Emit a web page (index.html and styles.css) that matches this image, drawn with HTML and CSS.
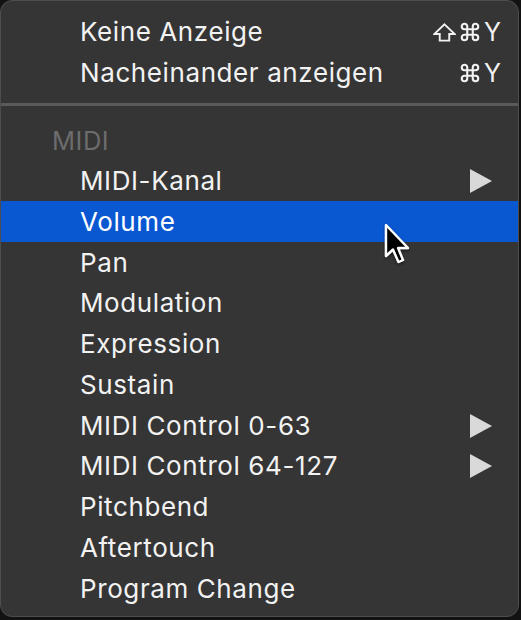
FILE: index.html
```html
<!DOCTYPE html>
<html lang="de">
<head>
<meta charset="utf-8">
<title>Menü</title>
<link rel="stylesheet" href="styles.css">
</head>
<body>
<div class="menu">
  <div class="row">
    <span class="label">Keine Anzeige</span>
    <span class="shortcut">
      <svg class="key-shift" viewBox="0 0 24 20" width="23" height="19"><path d="M12 1.5 L22.5 11.5 H17 V18.5 H7 V11.5 H1.5 Z" fill="none" stroke="#f2f2f2" stroke-width="2" stroke-linejoin="miter"/></svg>
      <svg class="key-cmd" viewBox="0 0 24 24" width="22" height="22"><path d="M18 3a3 3 0 0 0-3 3v12a3 3 0 0 0 3 3 3 3 0 0 0 3-3 3 3 0 0 0-3-3H6a3 3 0 0 0-3 3 3 3 0 0 0 3 3 3 3 0 0 0 3-3V6a3 3 0 0 0-3-3 3 3 0 0 0-3 3 3 3 0 0 0 3 3h12a3 3 0 0 0 3-3 3 3 0 0 0-3-3z" fill="none" stroke="#f2f2f2" stroke-width="2.3"/></svg>
      <span class="key-letter">Y</span>
    </span>
  </div>
  <div class="row">
    <span class="label">Nacheinander anzeigen</span>
    <span class="shortcut">
      <svg class="key-cmd" viewBox="0 0 24 24" width="22" height="22"><path d="M18 3a3 3 0 0 0-3 3v12a3 3 0 0 0 3 3 3 3 0 0 0 3-3 3 3 0 0 0-3-3H6a3 3 0 0 0-3 3 3 3 0 0 0 3 3 3 3 0 0 0 3-3V6a3 3 0 0 0-3-3 3 3 0 0 0-3 3 3 3 0 0 0 3 3h12a3 3 0 0 0 3-3 3 3 0 0 0-3-3z" fill="none" stroke="#f2f2f2" stroke-width="2.3"/></svg>
      <span class="key-letter">Y</span>
    </span>
  </div>
  <div class="sep"></div>
  <div class="header">MIDI</div>
  <div class="row">
    <span class="label">MIDI-Kanal</span>
    <svg class="sub" viewBox="0 0 22 24" width="22" height="24"><polygon points="0,0 22,12 0,24" fill="#d9d9d9"/></svg>
  </div>
  <div class="row selected"><span class="label">Volume</span></div>
  <div class="row"><span class="label">Pan</span></div>
  <div class="row"><span class="label">Modulation</span></div>
  <div class="row"><span class="label">Expression</span></div>
  <div class="row"><span class="label">Sustain</span></div>
  <div class="row">
    <span class="label">MIDI Control 0-63</span>
    <svg class="sub" viewBox="0 0 22 24" width="22" height="24"><polygon points="0,0 22,12 0,24" fill="#d9d9d9"/></svg>
  </div>
  <div class="row">
    <span class="label">MIDI Control 64-127</span>
    <svg class="sub" viewBox="0 0 22 24" width="22" height="24"><polygon points="0,0 22,12 0,24" fill="#d9d9d9"/></svg>
  </div>
  <div class="row"><span class="label">Pitchbend</span></div>
  <div class="row"><span class="label">Aftertouch</span></div>
  <div class="row"><span class="label">Program Change</span></div>

  <svg class="cursor" viewBox="-3 -3 30 45" width="30" height="45">
    <defs>
      <filter id="sh" x="-30%" y="-30%" width="160%" height="160%">
        <feDropShadow dx="0" dy="1.5" stdDeviation="1.5" flood-color="#000" flood-opacity="0.6"/>
      </filter>
    </defs>
    <polygon points="0,0 0,31 7,24.5 12.5,37 17,35 12,23 22,23" fill="#000" stroke="#fff" stroke-width="2.4" stroke-linejoin="round" filter="url(#sh)"/>
  </svg>
</div>
</body>
</html>
```

FILE: styles.css
```css
html, body {
  margin: 0;
  padding: 0;
  background: #121212;
}

body {
  width: 521px;
  height: 620px;
  overflow: hidden;
  font-family: "Inter", "Liberation Sans", sans-serif;
}

.menu {
  position: relative;
  box-sizing: border-box;
  width: 519px;
  height: 617px;
  background: #353535;
  border: 1px solid #4d4d4d;
  border-radius: 12px;
  padding: 10.4px 0 8px 0;
  display: flex;
  flex-direction: column;
}

.row {
  height: 40.75px;
  flex: 0 0 auto;
  display: flex;
  align-items: center;
  justify-content: space-between;
  padding: 1px 17px 0 79px;
  box-sizing: border-box;
  color: #f2f2f2;
  font-size: 26px;
}

.row.selected {
  background: #0a57d2;
  color: #ffffff;
}

.label {
  white-space: nowrap;
  line-height: 1;
  letter-spacing: 0.6px;
}

.shortcut {
  display: flex;
  align-items: center;
  gap: 2px;
}

.key-shift {
  display: block;
  margin-right: 1px;
}

.key-cmd {
  display: block;
}

.key-letter {
  font-size: 25px;
  line-height: 1;
  margin-left: 1px;
}

.sub {
  display: block;
  margin-right: 9px;
}

.sep {
  flex: 0 0 auto;
  height: 3px;
  margin: 10px 0 13.6px 0;
  background: #5a5a5a;
}

.header {
  height: 40.75px;
  flex: 0 0 auto;
  display: flex;
  align-items: center;
  padding: 1px 0 0 51px;
  box-sizing: border-box;
  color: #6c6c6c;
  font-size: 25.5px;
  letter-spacing: 0.5px;
}

.cursor {
  position: absolute;
  left: 382px;
  top: 221px;
}
```
